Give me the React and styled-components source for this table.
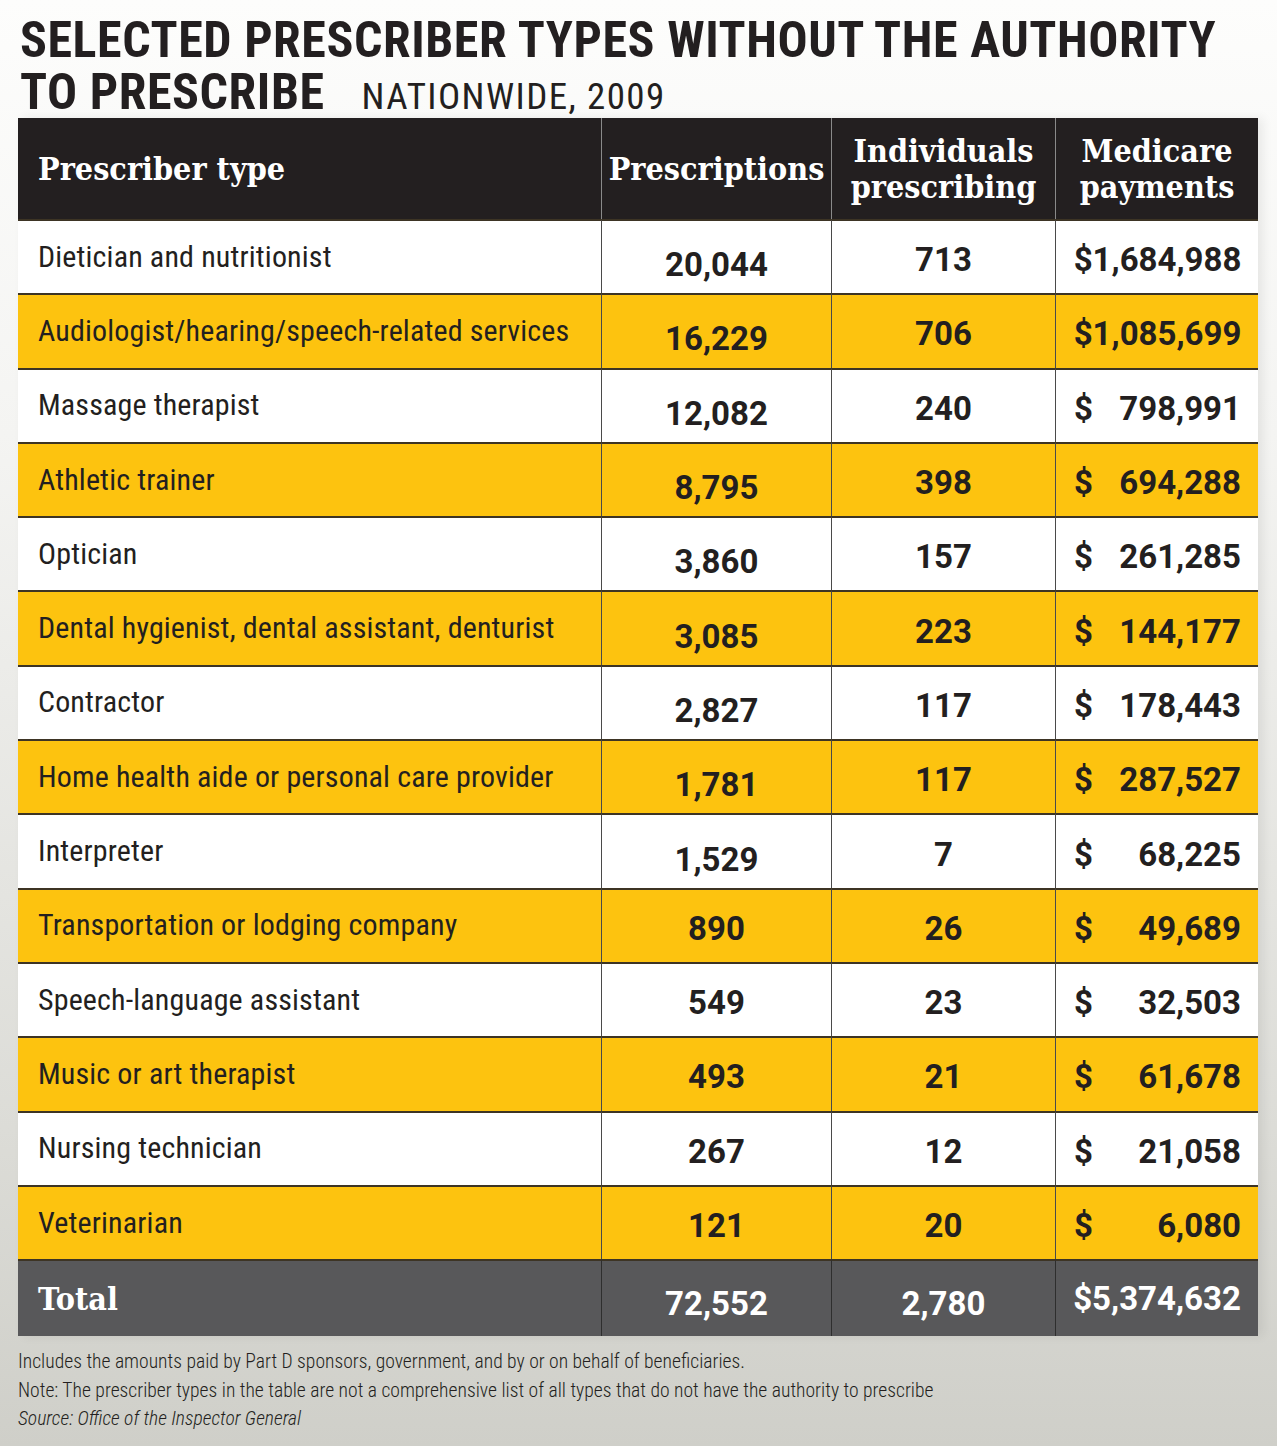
import React from 'react';
import styled, { createGlobalStyle } from 'styled-components';

const SANS = `"Roboto", "Roboto Condensed", "Liberation Sans", sans-serif`;
const SERIF = `"DejaVu Serif Condensed", "DejaVu Serif", "Liberation Serif", serif`;

const Global = createGlobalStyle`
    html, body {
        margin: 0;
        padding: 0;
    }
    body {
        width: 1277px;
        height: 1446px;
        overflow: hidden;
        background: linear-gradient(180deg, #fdfdfc 0%, #f4f4f2 30%, #dcdcd7 78%, #cfcfc9 100%);
    }
`;

const Page = styled.div`
    width: 1277px;
    height: 1446px;
    box-sizing: border-box;
    padding: 14px 0 0 18px;
    color: #231f20;
`;

const Title = styled.h1`
    margin: 0;
    padding-left: 2px;
    font-family: ${SANS};
    font-stretch: 75%;
    font-weight: 700;
    font-size: 50px;
    line-height: 52px;
    letter-spacing: 0.55px;
    white-space: nowrap;
    text-transform: uppercase;
`;

const Sub = styled.span`
    font-weight: 400;
    font-size: 37px;
    line-height: 1;
    letter-spacing: 1.4px;
    margin-left: 37px;
`;

const Table = styled.div`
    width: 1240px;
    display: grid;
    grid-template-columns: 583px 230px 224px 203px;
    box-shadow: 5px 0 10px rgba(0, 0, 0, 0.07);
`;

const Head = styled.div`
    height: 101px;
    background: #231f20;
    color: #ffffff;
    display: flex;
    align-items: center;
    justify-content: ${p => (p.left ? 'flex-start' : 'center')};
    text-align: center;
    padding-left: ${p => (p.left ? '20px' : '0')};
    border-left: ${p => (p.first ? 'none' : '1.5px solid #8a8a8a')};
    font-family: ${SERIF};
    font-stretch: condensed;
    font-weight: 700;
    font-size: 32px;
    line-height: 36px;
    box-sizing: border-box;
`;

const Cell = styled.div`
    height: 74.3px;
    box-sizing: border-box;
    background: ${p => (p.alt ? '#fdc30f' : '#ffffff')};
    border-top: 2px solid #3d3424;
    border-left: ${p => (p.first ? 'none' : '1.5px solid #4a4a4a')};
    display: flex;
    align-items: center;
    font-family: ${SANS};
    color: #231f20;
    white-space: nowrap;
`;

const Label = styled(Cell)`
    padding: 0 0 2px 20px;
    font-stretch: 75%;
    font-size: 30px;
    letter-spacing: 0.15px;
    font-weight: 400;
`;

const Num = styled(Cell)`
    justify-content: center;
    font-size: 33px;
    font-weight: 700;
    padding-top: ${p => (p.low ? '15px' : '5px')};
`;

const Money = styled(Cell)`
    justify-content: ${p => (p.full ? 'center' : 'space-between')};
    padding: 5px 17px 0 18px;
    font-size: 33px;
    font-weight: 700;
`;

const TotalCell = styled.div`
    height: 77px;
    box-sizing: border-box;
    background: #58585a;
    color: #ffffff;
    border-top: 2px solid #3d3424;
    border-left: ${p => (p.first ? 'none' : '1.5px solid #2e2e2e')};
    display: flex;
    align-items: center;
    justify-content: ${p => (p.first ? 'flex-start' : 'center')};
    padding-left: ${p => (p.first ? '20px' : '0')};
    padding-top: ${p => (p.low ? '9px' : '0')};
    font-family: ${p => (p.first ? SERIF : SANS)};
    font-stretch: ${p => (p.first ? 'condensed' : 'normal')};
    font-weight: 700;
    font-size: ${p => (p.first ? '32px' : '33px')};
`;

const Notes = styled.div`
    margin-top: 12px;
    font-family: ${SANS};
    font-stretch: 75%;
    font-weight: 300;
    font-size: 19.6px;
    line-height: 28.5px;
    color: #231f20;
    white-space: nowrap;
`;

const Source = styled.div`
    font-style: italic;
`;

const rows = [
    ['Dietician and nutritionist', '20,044', '713', '$1,684,988'],
    ['Audiologist/hearing/speech-related services', '16,229', '706', '$1,085,699'],
    ['Massage therapist', '12,082', '240', '798,991'],
    ['Athletic trainer', '8,795', '398', '694,288'],
    ['Optician', '3,860', '157', '261,285'],
    ['Dental hygienist, dental assistant, denturist', '3,085', '223', '144,177'],
    ['Contractor', '2,827', '117', '178,443'],
    ['Home health aide or personal care provider', '1,781', '117', '287,527'],
    ['Interpreter', '1,529', '7', '68,225'],
    ['Transportation or lodging company', '890', '26', '49,689'],
    ['Speech-language assistant', '549', '23', '32,503'],
    ['Music or art therapist', '493', '21', '61,678'],
    ['Nursing technician', '267', '12', '21,058'],
    ['Veterinarian', '121', '20', '6,080'],
];

export default function App() {
    return (
        <Page>
            <Global />
            <Title>
                Selected prescriber types without the authority<br />
                to prescribe<Sub>NATIONWIDE, 2009</Sub>
            </Title>
            <Table>
                <Head first left>Prescriber type</Head>
                <Head>Prescriptions</Head>
                <Head>Individuals<br />prescribing</Head>
                <Head>Medicare<br />payments</Head>
                {rows.map(([name, rx, people, pay], i) => {
                    const alt = i % 2 === 1;
                    const full = pay.startsWith('$');
                    return (
                        <React.Fragment key={name}>
                            <Label first alt={alt}>{name}</Label>
                            <Num alt={alt} low={rx.length > 4}>{rx}</Num>
                            <Num alt={alt}>{people}</Num>
                            <Money alt={alt} full={full}>
                                {full ? pay : <><span>$</span><span>{pay}</span></>}
                            </Money>
                        </React.Fragment>
                    );
                })}
                <TotalCell first>Total</TotalCell>
                <TotalCell low>72,552</TotalCell>
                <TotalCell low>2,780</TotalCell>
                <TotalCell>$5,374,632</TotalCell>
            </Table>
            <Notes>
                <div>Includes the amounts paid by Part D sponsors, government, and by or on behalf of beneficiaries.</div>
                <div>Note: The prescriber types in the table are not a comprehensive list of all types that do not have the authority to prescribe</div>
                <Source>Source: Office of the Inspector General</Source>
            </Notes>
        </Page>
    );
}
